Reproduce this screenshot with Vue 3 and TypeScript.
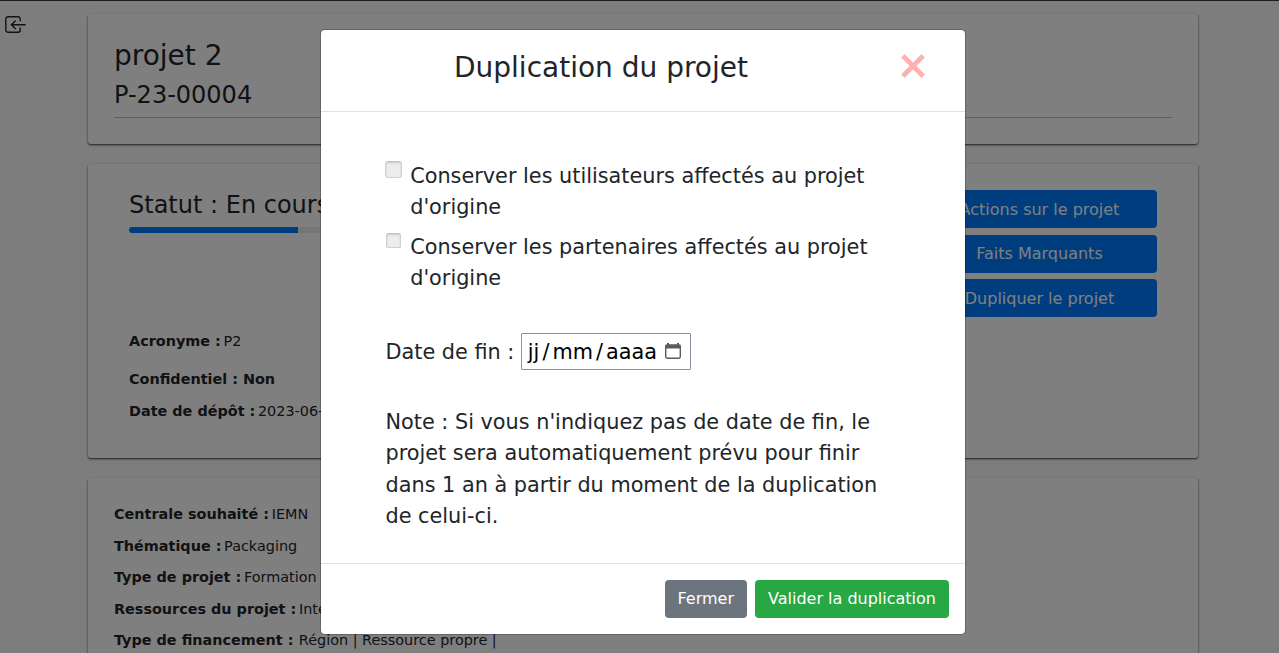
<script setup lang="ts">
interface Field { label: string; value: string; gap: number }

const summary: Field[] = [
  { label: 'Acronyme :', value: 'P2', gap: 38 },
  { label: 'Confidentiel : Non', value: '', gap: 32 },
  { label: 'Date de dépôt :', value: '2023-06-12', gap: 32 },
]
const details: Field[] = [
  { label: 'Centrale souhaité :', value: 'IEMN', gap: 32 },
  { label: 'Thématique :', value: 'Packaging', gap: 31 },
  { label: 'Type de projet :', value: 'Formation', gap: 32 },
  { label: 'Ressources du projet :', value: 'Interne', gap: 31 },
]
const actions: string[] = ['Actions sur le projet', 'Faits Marquants', 'Dupliquer le projet']
</script>

<template>
  <div class="screen">
    <div class="page">
      <svg class="exit" viewBox="0 0 22 18" width="22" height="18" fill="none" stroke="#212529" stroke-width="1.4">
        <path d="M15.2 5.2V2.8a2 2 0 0 0-2-2H2.8a2 2 0 0 0-2 2v11.4a2 2 0 0 0 2 2h10.4a2 2 0 0 0 2-2v-2.7M20.6 8.8H6.4M10.7 4.6 6.4 8.8l4.3 4.2" />
      </svg>
      <main class="cards">
        <section class="card head">
          <h3>projet 2</h3>
          <h4>P-23-00004</h4>
          <div class="rule"></div>
        </section>
        <section class="card status">
          <div class="left">
            <h4>Statut : En cours</h4>
            <div class="track"><div class="bar"></div></div>
            <div class="fields">
              <p v-for="f in summary" :key="f.label" :style="{ height: f.gap + 'px' }"><b>{{ f.label }}</b><span>{{ f.value }}</span></p>
            </div>
          </div>
          <div class="actions">
            <button v-for="a in actions" :key="a" class="btn blue">{{ a }}</button>
          </div>
        </section>
        <section class="card details">
          <p v-for="f in details" :key="f.label" :style="{ height: f.gap + 'px' }"><b>{{ f.label }}</b><span>{{ f.value }}</span></p>
          <p><b>Type de financement :</b><span class="wide">Région | Ressource propre |</span></p>
        </section>
      </main>
    </div>
    <div class="backdrop">
      <div class="modal">
        <header>
          <h3>Duplication du projet</h3>
          <svg class="close" viewBox="0 0 24 24" width="24" height="24" stroke="#ffb0b0" stroke-width="4.8"><path d="M1.8 1.8 22.2 22.2M22.2 1.8 1.8 22.2" /></svg>
        </header>
        <div class="body">
          <div class="check"><i class="box big"></i><label>Conserver les utilisateurs affectés au projet d'origine</label></div>
          <div class="check"><i class="box"></i><label>Conserver les partenaires affectés au projet d'origine</label></div>
          <div class="date">
            <span class="caption">Date de fin :</span>
            <div class="input">
              <span class="part">jj</span><span class="slash">/</span><span class="part">mm</span><span class="slash">/</span><span class="part">aaaa</span>
              <svg viewBox="0 0 16 16" width="16" height="16" fill="none" stroke="#5b5b5b"><path d="M.7 3.5v10a1.8 1.8 0 0 0 1.8 1.8h11a1.8 1.8 0 0 0 1.8-1.8v-10" stroke-width="1.4" /><path d="M0 5.5V3.2A2 2 0 0 1 2 1.2V0h2v1.2h8V0h2v1.2a2 2 0 0 1 2 2v2.3z" fill="#5b5b5b" stroke="none" /></svg>
            </div>
          </div>
          <p class="note">Note : Si vous n'indiquez pas de date de fin, le projet sera automatiquement prévu pour finir dans 1 an à partir du moment de la duplication de celui-ci.</p>
        </div>
        <footer>
          <button class="btn gray">Fermer</button>
          <button class="btn green">Valider la duplication</button>
        </footer>
      </div>
    </div>
  </div>
</template>

<style>
body { overflow: hidden; }
</style>
<style scoped>
* { box-sizing: border-box; }
.screen { position: relative; width: 1279px; height: 653px; overflow: hidden; font-family: "DejaVu Sans", sans-serif; color: #212529; font-size: 16px; }
.page { height: 653px; display: flex; align-items: flex-start; background: #fafafa; border-top: 1px solid #343a40; overflow: hidden; }
h3, h4, p { margin: 0; font-weight: 400; white-space: nowrap; }
h3 { font-size: 28px; line-height: 33.6px; }
h4 { font-size: 24px; line-height: 28.8px; }
.exit { margin: 15px 0 0 5px; flex: none; }
.cards { margin: 13px 0 0 61px; width: 1110px; flex: none; display: flex; flex-direction: column; gap: 20px; }
.card { background: #fff; border-radius: 3px; box-shadow: 0 1px 3px rgba(0,0,0,.12), 0 1px 2px rgba(0,0,0,.7); }
.head { height: 130px; padding: 25px 26px; }
.head h4 { margin-top: 8px; }
.rule { margin-top: 8px; border-top: 1px solid #ffc107; }
.status { height: 294px; padding: 26px 41px; display: flex; justify-content: space-between; }
.left { width: 400px; padding-top: 1px; }
.track { margin-top: 7px; height: 6px; border-radius: 3px; background: #e9ecef; overflow: hidden; }
.bar { height: 6px; width: 169px; background: #007bff; }
.fields { margin-top: 97px; }
.fields p, .details p { font-size: 14.4px; line-height: 22px; }
p span { margin-left: 2.7px; }
p .wide { margin-left: 5.4px; }
.actions { width: 235px; display: flex; flex-direction: column; gap: 6.6px; }
.btn { height: 38px; border: 0; border-radius: 4px; padding: 0 13px; font: 16px/24px "DejaVu Sans", sans-serif; color: #fff; white-space: nowrap; }
.blue { background: #007bff; }
.blue:nth-child(odd) { padding-top: 2px; }
.gray { background: #6c757d; }
.green { background: #28a745; }
.details { height: 300px; padding: 25px 26px; }
.backdrop { position: absolute; inset: 0; background: rgba(0,0,0,.5); display: flex; align-items: flex-start; padding: 29px 0 0 320px; }
.modal { width: 646px; height: 606px; background: #fff; background-clip: padding-box; border: 1px solid rgba(0,0,0,.2); border-radius: 5px; display: flex; flex-direction: column; }
header { height: 82px; flex: none; padding: 21px 40px 0 133px; display: flex; justify-content: space-between; align-items: flex-start; border-bottom: 1px solid #dee2e6; }
.close { margin-top: 3.4px; }
.body { flex: 1; padding: 48px 64px 0 64.5px; font-size: 20.8px; line-height: 31.3px; }
.check { display: flex; align-items: flex-start; height: 71px; }
.check label { width: 490px; padding-top: 1px; }
.box { flex: none; width: 15px; height: 15px; margin: 2px 9.2px 0 .5px; border-radius: 2px; background: #ededed; border: 1px solid #d0d0d0; border-top-color: #c4c4c4; box-shadow: inset 0 1px 2px rgba(0,0,0,.15); }
.big { width: 17px; height: 17px; margin: 1px 8.2px 0 -.5px; border-radius: 3px; }
.date { display: flex; align-items: center; height: 37px; margin-top: 31px; }
.caption { padding-top: 2px; }
.input { margin-left: 6.5px; width: 170px; height: 37px; border: 1px solid #8f8f9d; border-radius: 1px; display: flex; align-items: center; padding: 2px 0 0 6px; color: #000; }
.slash { margin: 0 3px; }
.input svg { margin: -3px 0 0 8px; }
.note { margin-top: 37px; white-space: normal; }
footer { height: 71px; flex: none; border-top: 1px solid #dee2e6; padding: 0 16px; display: flex; justify-content: flex-end; align-items: center; gap: 8px; }
</style>
